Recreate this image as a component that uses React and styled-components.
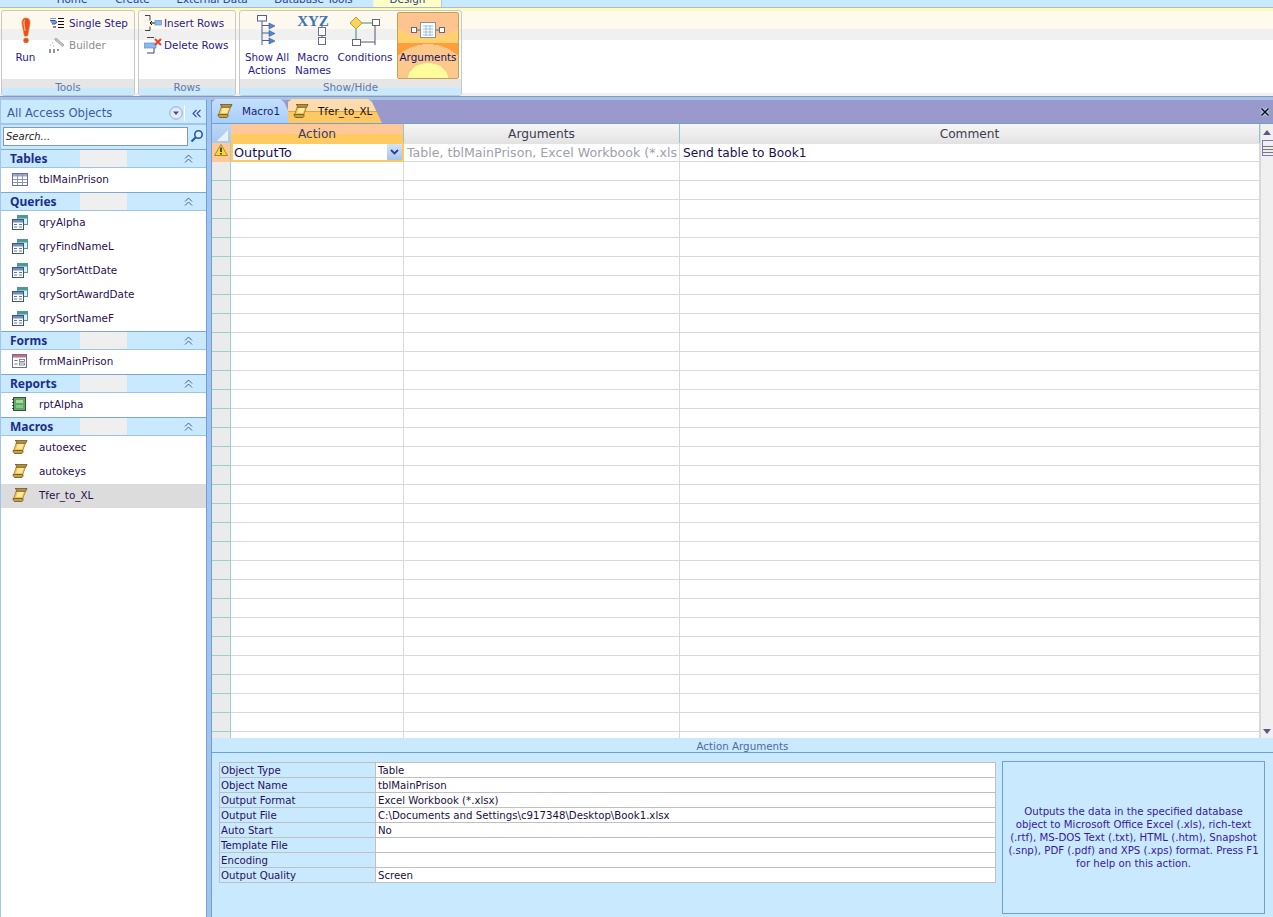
import React from 'react';
import styled, { createGlobalStyle } from 'styled-components';

const GlobalStyle = createGlobalStyle`
  html, body { margin: 0; padding: 0; background: #fff; overflow: hidden; }
  body { font-family: "DejaVu Sans", "Noto Sans", sans-serif; font-size: 10.4px; color: #1c0f5e; }
  * { box-sizing: border-box; }
`;

const BLUE = '#c9e9ff';
const BAR = '#a3c5ed';
const LINE = '#6ea0d8';

/* ---------- drawn icons ---------- */

const RunIcon = () => (
  <svg width="14" height="28" viewBox="0 0 14 28">
    <path d="M7 1C3.500 1 2.600 4 3.200 7.500L5.400 19h3.200l2.200-11.500C11.400 4 10.500 1 7 1z" fill="#ee4a20" stroke="#d8881c" strokeWidth=".7" />
    <path d="M6 3.200C5 3.600 4.800 6 5.200 8l1 6" stroke="#fbb48e" strokeWidth="1.200" fill="none" />
    <circle cx="7" cy="23.400" r="2.500" fill="#e8501c" stroke="#d8881c" strokeWidth=".6" />
  </svg>
);

const StepIcon = () => (
  <svg width="16" height="13" viewBox="0 0 16 13">
    <path d="M1 3.500h5l2 1.800L6 7H3" fill="#7a9bd8" stroke="#37579c" strokeWidth="1" />
    <path d="M1 1.500h6" stroke="#7a9bd8" />
    <path d="M9 1.500h6M9 4.500h6M9 7.500h6M9 10.500h6" stroke="#111" strokeWidth="1" />
    <path d="M4 10h3" stroke="#111" />
  </svg>
);

const BuilderIcon = () => (
  <svg width="16" height="16" viewBox="0 0 16 16">
    <path d="M7 1l8 7-1.500 1.500-8-7z" fill="#c8c8c8" stroke="#8a8a8a" strokeWidth=".7" />
    <path d="M3 6h1M1 8h1M4 9h1" stroke="#9aa4b8" strokeWidth="1.200" />
    <path d="M0 13h2M4 13h2M8 13h2M0 15h2M4 15h2" stroke="#6b7590" strokeWidth="1.300" />
  </svg>
);

const InsertRowsIcon = () => (
  <svg width="18" height="16" viewBox="0 0 18 16">
    <path d="M1 .5h5v5M1 15.500h5v-4" fill="none" stroke="#444" strokeWidth="1" />
    <path d="M6 8H11M8 6l-2 2 2 2" fill="none" stroke="#111" strokeWidth="1" />
    <rect x="11" y="5.500" width="6.500" height="4.500" fill="#8db8ec" stroke="#5f8cc8" strokeWidth=".7" />
  </svg>
);

const DeleteRowsIcon = () => (
  <svg width="18" height="17" viewBox="0 0 18 17">
    <path d="M0 6h12v5H0z" fill="#8db8ec" stroke="#5f8cc8" strokeWidth=".7" />
    <path d="M3 .5h7M10 11v5H3" fill="none" stroke="#445" strokeWidth="1" />
    <path d="M11 2l6 6M17 2l-6 6" stroke="#e8402a" strokeWidth="2" />
  </svg>
);

const ShowAllIcon = () => (
  <svg width="20" height="31" viewBox="0 0 20 31">
    <rect x=".5" y=".5" width="9" height="5.500" fill="#fff" stroke="#555f90" />
    <path d="M5 6v24" stroke="#555f90" />
    <path d="M5 10.500h8M5 18h8M5 25.500h8" stroke="#555f90" />
    <path d="M12 8l6 3-6 3zM12 15.500l6 3-6 3zM12 23l6 3-6 3z" fill="#4f86d8" stroke="#37579c" strokeWidth=".6" />
  </svg>
);

const MacroNamesIcon = () => (
  <svg width="32" height="31" viewBox="0 0 32 31">
    <path d="M25 10v3M25 20v3" stroke="#555f90" />
    <rect x="21.500" y="12.500" width="7" height="8" fill="#fff" stroke="#666e90" />
    <rect x="21.500" y="22.500" width="7" height="7" fill="#fff" stroke="#666e90" />
    <text x="16" y="10.500" textAnchor="middle" fontFamily='"Liberation Serif", serif' fontWeight="700" fontSize="15" fill="#3b72b8">XYZ</text>
  </svg>
);

const ConditionsIcon = () => (
  <svg width="30" height="30" viewBox="0 0 30 30">
    <path d="M12 7h11" stroke="#3c8a7a" />
    <path d="M6 13v11" stroke="#3c8a7a" />
    <path d="M25 10v19M11 26h14" stroke="#557" fill="none" />
    <path d="M6 1l6 6-6 6-6-6z" fill="#f8d45a" stroke="#c89a28" />
    <rect x="22.500" y="3.500" width="7" height="6" fill="#fff" stroke="#667" />
    <rect x="2.500" y="23.500" width="8" height="6" fill="#fff" stroke="#667" />
  </svg>
);

const ArgumentsIcon = () => (
  <svg width="34" height="16" viewBox="0 0 34 16">
    <path d="M6 8h4M24 8h4" stroke="#667" />
    <rect x=".5" y="5.500" width="5" height="5" fill="#fff" stroke="#667" />
    <rect x="28.500" y="5.500" width="5" height="5" fill="#fff" stroke="#667" />
    <rect x="9.500" y=".5" width="15" height="15" fill="#fff" stroke="#8a90a8" />
    <path d="M12 4h10M12 7h10M12 10h10M12 13h10M15 3v11M19 3v11" stroke="#9cc0dc" />
  </svg>
);

const ScrollIcon = ({ size = 16 }) => (
  <svg width={size} height={size} viewBox="0 0 16 16">
    <path d="M4.500 3h9.500l-3.500 9H1.500z" fill="#f2c24e" stroke="#8a6e2c" strokeWidth=".7" />
    <path d="M6 4.500h6l-2 5.500H4z" fill="#ffe9a0" />
    <path d="M3 1.500h12c-.2 1.300-.9 2.300-1.800 2.800H4.400c.8-.8.300-2.200-1.400-2.800z" fill="#b8923c" stroke="#6e5620" strokeWidth=".8" />
    <path d="M1 11.500h9.800c.6.500.3 2.300-.8 3H3c-1.200 0-2-1.500-2-3z" fill="#c9a040" stroke="#6e5620" strokeWidth=".8" />
  </svg>
);

const TableIcon = () => (
  <svg width="16" height="13" viewBox="0 0 16 13">
    <rect x=".5" y=".5" width="15" height="12" fill="#fff" stroke="#687298" />
    <rect x="1" y="1" width="14" height="2.500" fill="#9aa6c8" />
    <path d="M1 6.500h14M1 9.500h14M5.500 1v11M10.500 1v11" stroke="#8a94b8" />
  </svg>
);

const QueryIcon = () => (
  <svg width="16" height="15" viewBox="0 0 16 15">
    <rect x="5.500" y=".5" width="10" height="9" fill="#d8f2ee" stroke="#4a9a9a" />
    <rect x="6" y="1" width="9" height="2.500" fill="#4a9a9a" />
    <rect x=".5" y="4.500" width="11" height="10" fill="#fff" stroke="#47507c" />
    <rect x="1" y="5" width="10" height="2.500" fill="#6f8fc0" />
    <path d="M2 9.500h3M7 9.500h3M2 12h3M7 12h3" stroke="#5a78a8" />
  </svg>
);

const FormIcon = () => (
  <svg width="15" height="14" viewBox="0 0 15 14">
    <rect x=".5" y=".5" width="14" height="13" fill="#fff" stroke="#6a7090" />
    <rect x="1" y="1" width="13" height="2.500" fill="#c86a8a" />
    <path d="M2.500 6.500h3M2.500 10h3" stroke="#6a7090" />
    <rect x="7.500" y="5.500" width="5" height="2" fill="#fff" stroke="#6a7090" strokeWidth=".8" />
    <rect x="7.500" y="9" width="5" height="2" fill="#fff" stroke="#6a7090" strokeWidth=".8" />
  </svg>
);

const ReportIcon = () => (
  <svg width="14" height="14" viewBox="0 0 14 14">
    <rect x="1.500" y=".5" width="12" height="13" fill="#5fa868" stroke="#2d5a33" />
    <rect x="4" y="3" width="7" height="3" fill="#a8d8a0" />
    <rect x="4" y="8" width="7" height="3" fill="#8ac48a" />
    <path d="M1 2v1M1 5v1M1 8v1M1 11v1" stroke="#222" strokeWidth="1.500" />
  </svg>
);

const ICONS = { table: TableIcon, query: QueryIcon, form: FormIcon, report: ReportIcon, macro: ScrollIcon };

const DoubleUp = () => (
  <svg width="9" height="9" viewBox="0 0 9 9">
    <path d="M1 4.500l3.500-3.500L8 4.500M1 8.500L4.500 5 8 8.500" fill="none" stroke="#4a5aa8" strokeWidth="1" />
  </svg>
);

const DoubleLeft = () => (
  <svg width="9" height="9" viewBox="0 0 9 9">
    <path d="M4.500 1L1 4.500 4.500 8M8.500 1L5 4.500 8.500 8" fill="none" stroke="#3a4aa0" strokeWidth="1.100" />
  </svg>
);

const MenuCircle = () => (
  <svg width="14" height="14" viewBox="0 0 14 14">
    <circle cx="7" cy="7" r="6.200" fill="#e4eaf8" stroke="#9aa8cc" />
    <path d="M4 5.500h6L7 9z" fill="#445080" />
  </svg>
);

const Magnifier = () => (
  <svg width="14" height="14" viewBox="0 0 14 14">
    <circle cx="8.500" cy="5.500" r="3.700" fill="#d8eefc" stroke="#2a5a9c" strokeWidth="1.600" />
    <path d="M5.500 8.500L1.500 12.500" stroke="#2a5a9c" strokeWidth="2.200" />
  </svg>
);

const WarnIcon = () => (
  <svg width="14" height="12" viewBox="0 0 14 12">
    <path d="M7 .5l6.500 11H.5z" fill="#f8d838" stroke="#8a7a20" strokeWidth=".8" />
    <path d="M7 3.500v4.500M7 9v1.500" stroke="#111" strokeWidth="1.400" />
  </svg>
);

const Chevron = () => (
  <svg width="9" height="6" viewBox="0 0 9 6">
    <path d="M1 1l3.500 3.500L8 1" fill="none" stroke="#27408c" strokeWidth="1.800" />
  </svg>
);

const CloseIcon = () => (
  <svg width="10" height="10" viewBox="0 0 10 10">
    <path d="M1.500 1.500l7 7M8.500 1.500l-7 7" stroke="#b8dcf8" strokeWidth="3.400" />
    <path d="M1.500 1.500l7 7M8.500 1.500l-7 7" stroke="#111" strokeWidth="1.600" />
  </svg>
);

/* ---------- page ---------- */

const Page = styled.div`
  width: 1273px;
  height: 917px;
  display: flex;
  flex-direction: column;
  overflow: hidden;
`;

const TabStrip = styled.div`
  height: 8px;
  flex: none;
  display: flex;
  padding-left: 44px;
  background: ${BLUE};
  border-bottom: 1px solid #b0b8c4;
  overflow: hidden;
`;

const RibbonTab = styled.div`
  width: ${(p) => p.$w}px;
  height: 16px;
  margin-top: -9px;
  margin-left: ${(p) => p.$ml || 0}px;
  text-align: center;
  line-height: 16px;
  font-size: 10.4px;
  color: #27408c;
  flex: none;
  background: ${(p) => (p.$active ? '#ffffc8' : 'transparent')};
  border-left: ${(p) => (p.$active ? '1px solid #e8f4ff' : 'none')};
  border-right: ${(p) => (p.$active ? '1px solid #a8c8e8' : 'none')};
`;

const Ribbon = styled.div`
  height: 88px;
  flex: none;
  display: flex;
  gap: 3px;
  padding: 2px 0 0 1px;
  background: linear-gradient(to bottom, #fffbb8 0 3px, #fff9ee 3px 21px, #f0f0f0 21px 32px, #fff 32px 85px, #f0f0f0 85px);
`;

const Group = styled.section`
  width: ${(p) => p.$w}px;
  height: 86px;
  display: flex;
  flex-direction: column;
  border: 1px solid #c8c8c8;
  border-radius: 3px;
  overflow: hidden;
  background: linear-gradient(to bottom, #fdf9ef 0 18px, #f0f0f0 18px 29px, #fff 29px);
`;

const GroupBody = styled.div`
  flex: 1;
  display: flex;
  padding: ${(p) => p.$pad || '0'};
`;

const GroupLabel = styled.div`
  height: 16px;
  flex: none;
  text-align: center;
  font-size: 10.4px;
  line-height: 17px;
  color: #5f78a8;
  background: linear-gradient(to bottom, #e6e6e6 0 9px, ${BLUE} 9px);
`;

const BigButton = styled.div`
  width: ${(p) => p.$w}px;
  height: 67px;
  flex: none;
  margin-left: ${(p) => p.$ml || 0}px;
  display: flex;
  flex-direction: column;
  align-items: center;
  text-align: center;
  line-height: 13px;
  font-size: 10.4px;
  white-space: nowrap;
  color: ${(p) => (p.$on ? '#10106a' : '#2a1a8a')};
  ${(p) => p.$on && `
    border: 1px solid #c8a24a;
    border-radius: 2px;
    background:
      radial-gradient(ellipse 20px 15px at 50% 100%, #fffb9c 0 99%, transparent 100%),
      radial-gradient(ellipse 40px 34px at 50% 100%, #fdc88c 0 99%, transparent 100%),
      radial-gradient(ellipse 40px 24px at 50% 0, #fdc490 0 99%, transparent 100%),
      linear-gradient(to bottom, #ffd070 0 30px, #ff9e3a 30px);
  `}
`;

const BigIconSlot = styled.div`
  height: ${(p) => p.$h}px;
  padding-top: ${(p) => p.$top || 0}px;
  display: flex;
  justify-content: center;
  align-items: flex-start;
  flex: none;
`;

const RunLabel = styled.div`
  margin-top: 5px;
`;

const SmallStack = styled.div`
  display: flex;
  flex-direction: column;
  padding-top: 4px;
  gap: 6px;
`;

const SmallButton = styled.div`
  height: 16px;
  display: flex;
  align-items: center;
  gap: ${(p) => p.$gap ?? 4}px;
  font-size: 10.4px;
  color: ${(p) => (p.$disabled ? '#8c8c8c' : '#2a1a8a')};
  white-space: nowrap;
`;

const Workspace = styled.div`
  flex: 1;
  min-height: 0;
  display: flex;
  border-top: 1px solid #8c98b8;
  padding-top: 3px;
  background: ${BAR};
`;

/* ---------- navigation pane ---------- */

const Nav = styled.nav`
  width: 207px;
  flex: none;
  display: flex;
  flex-direction: column;
  background: #fff;
  border-left: 1px solid ${BAR};
  border-right: 1px solid ${LINE};
`;

const NavHeader = styled.div`
  height: 25px;
  flex: none;
  display: flex;
  align-items: center;
  padding: 3px 0 0 6px;
  background: ${BLUE};
  font-size: 11.6px;
  color: #3c5c9c;
  border-bottom: 2px solid ${BAR};
`;

const NavTitle = styled.div`
  flex: 1;
`;

const NavMenu = styled.div`
  width: 17px;
  height: 16px;
  display: flex;
  align-items: center;
  justify-content: center;
  border-right: 1px solid #fff;
  margin-right: 2px;
`;

const NavCollapse = styled.div`
  width: 19px;
  display: flex;
  justify-content: center;
`;

const SearchRow = styled.div`
  height: 24px;
  flex: none;
  display: flex;
  align-items: flex-start;
  padding: 2px 0 0 2px;
  background: ${BLUE};
`;

const SearchBox = styled.div`
  width: 185px;
  height: 19px;
  border: 1px solid #7a99c8;
  background: #fff;
  font-style: italic;
  font-size: 10px;
  line-height: 17px;
  padding-left: 2px;
  color: #222;
`;

const SearchGo = styled.div`
  width: 17px;
  height: 18px;
  display: flex;
  align-items: center;
  justify-content: center;
`;

const GroupHead = styled.div`
  height: 19px;
  flex: none;
  display: flex;
  align-items: center;
  padding: 0 13px 0 9px;
  font-family: "Noto Sans", sans-serif;
  font-size: 12px;
  font-weight: 700;
  color: #1b2f8c;
  border-top: 1px solid #7fa8d0;
  border-bottom: 1px solid #9cc4e8;
  background: linear-gradient(to right, ${BLUE} 79px, #efefef 79px 126px, ${BLUE} 126px);
`;

const GroupName = styled.div`
  flex: 1;
`;

const NavItem = styled.div`
  height: 24px;
  flex: none;
  display: flex;
  align-items: center;
  padding-bottom: 2px;
  background: ${(p) => (p.$selected ? '#dcdcdc' : 'transparent')};
  font-size: 10.4px;
  color: #2a0f4c;
`;

const NavIconSlot = styled.div`
  width: 38px;
  padding-left: 11px;
  flex: none;
  display: flex;
`;

/* ---------- macro grid ---------- */

const Main = styled.main`
  flex: 1;
  min-width: 0;
  margin-left: 4px;
  border-left: 1px solid ${LINE};
  display: flex;
  flex-direction: column;
  background: #fff;
`;

const DocTabs = styled.div`
  height: 24px;
  flex: none;
  display: flex;
  align-items: flex-end;
  background: #9999cc;
  border-bottom: 1px solid ${LINE};
  position: relative;
`;

const DocTab = styled.div`
  width: ${(p) => p.$w}px;
  height: 24px;
  flex: none;
  display: flex;
  align-items: center;
  gap: ${(p) => p.$gap}px;
  padding-left: 5px;
  font-size: 10.4px;
  margin-left: ${(p) => p.$ml || 0}px;
  color: ${(p) => (p.$active ? '#111' : '#1c1c6e')};
  clip-path: polygon(0 3px, 4px 0, calc(100% - 14px) 0, calc(100% - 10px) 3px, 100% 100%, 0 100%);
  background: ${(p) => (p.$active
    ? 'linear-gradient(to bottom, #ffdcae 0 12px, #e8a040 12px 13px, #ffc861 13px)'
    : 'linear-gradient(to bottom, #c4e0fc, #a6cffa)')};
`;

const DocClose = styled.div`
  position: absolute;
  right: 3px;
  top: 7px;
  width: 10px;
  height: 10px;
  display: flex;
`;

const GridWrap = styled.div`
  flex: 1;
  min-height: 0;
  display: flex;
`;

const GridBody = styled.div`
  flex: 1;
  min-width: 0;
  overflow: hidden;
`;

const GridRow = styled.div`
  display: grid;
  grid-template-columns: 19px 173px 276px 1fr;
  height: 19px;
`;

const Corner = styled.div`
  background: linear-gradient(to bottom, #bcd6f6, #a9c8f0);
  display: flex;
  align-items: flex-end;
  justify-content: flex-end;
  padding: 0 3px 3px 0;
`;

const CornerMark = styled.div`
  width: 0;
  height: 0;
  border-style: solid;
  border-width: 0 0 11px 11px;
  border-color: transparent transparent #e8f2fc transparent;
`;

const ColHead = styled.div`
  text-align: center;
  font-size: 12.2px;
  line-height: 20px;
  color: ${(p) => (p.$active ? '#3a4060' : '#3c3c4c')};
  border-right: 1px solid #8fc7d0;
  background: ${(p) => (p.$active
    ? 'linear-gradient(to bottom, #ffc898 0 10px, #ffcb60 10px)'
    : 'linear-gradient(to bottom, #f6f6f6, #e2e2e2)')};
`;

const RowSelector = styled.div`
  background: ${(p) => (p.$active ? '#ffc898' : '#ebebeb')};
  border-bottom: 1px solid ${(p) => (p.$active ? '#ffc898' : '#97d2cf')};
  border-right: 1px solid #97d2cf;
  display: flex;
  justify-content: center;
  padding-top: 1px;
`;

const Cell = styled.div`
  font-size: ${(p) => (p.$muted ? 12.6 : 12.2)}px;
  line-height: 20px;
  padding-left: 3px;
  white-space: nowrap;
  overflow: hidden;
  border-right: 1px solid #d9d9d9;
  border-bottom: 1px solid #d9d9d9;
  color: ${(p) => (p.$muted ? '#a0a0a8' : '#1c0f4e')};
`;

const ActionCell = styled.div`
  display: flex;
  align-items: center;
  justify-content: space-between;
  font-size: 12.8px;
  padding: 1px 0 0 1px;
  border: 2px solid #ffc861;
  border-top: none;
  color: #1c0f4e;
`;

const DropButton = styled.div`
  width: 15px;
  height: 16px;
  display: flex;
  align-items: center;
  justify-content: center;
  background: linear-gradient(to bottom, #d4e4f8, #a8c4ec);
`;

const ScrollTrack = styled.div`
  width: 13px;
  flex: none;
  display: flex;
  flex-direction: column;
  align-items: center;
  padding-top: 6px;
  background: #f0f0f0;
  border-left: 1px solid #d9d9d9;
`;

const ArrowUp = styled.div`
  width: 0;
  height: 0;
  flex: none;
  border-style: solid;
  border-width: 0 4px 5px 4px;
  border-color: transparent transparent #5a5a88 transparent;
`;

const ArrowDown = styled(ArrowUp)`
  border-width: 5px 4px 0 4px;
  border-color: #5a5a88 transparent transparent transparent;
  margin-top: auto;
  margin-bottom: 4px;
`;

const Thumb = styled.div`
  width: 12px;
  height: 16px;
  flex: none;
  margin: 5px 0 0 1px;
  border: 1px solid #7a78b0;
  border-right: none;
  background: repeating-linear-gradient(to bottom, #eee 0 2px, #777 2px 3px);
  background-size: 100% 10px;
  background-repeat: no-repeat;
  background-position: 0 3px;
`;

/* ---------- action arguments ---------- */

const ArgsPanel = styled.div`
  height: 179px;
  flex: none;
  background: ${BLUE};
  display: flex;
  flex-direction: column;
`;

const ArgsTitle = styled.div`
  height: 15px;
  flex: none;
  border-bottom: 1px solid ${LINE};
  text-align: center;
  font-size: 10.3px;
  line-height: 16px;
  color: #4f6aa0;
`;

const ArgsBody = styled.div`
  flex: 1;
  display: flex;
  gap: 6px;
  padding: 8px 8px 3px 7px;
`;

const PropTable = styled.div`
  width: 777px;
  height: 121px;
  margin-top: 1px;
  flex: none;
  display: grid;
  grid-template-columns: 156px 1fr;
  grid-auto-rows: 15px;
  border-top: 1px solid #c0c0c0;
  border-left: 1px solid #c0c0c0;
`;

const PropLabel = styled.div`
  font-size: 10.2px;
  line-height: 15px;
  padding-left: 1px;
  color: #2a0f5c;
  border-right: 1px solid #c0c0c0;
  border-bottom: 1px solid #c0c0c0;
`;

const PropValue = styled.div`
  font-size: 10.2px;
  line-height: 15px;
  padding-left: 2px;
  background: #fff;
  color: #1c0f3e;
  border-right: 1px solid #c0c0c0;
  border-bottom: 1px solid #c0c0c0;
  white-space: nowrap;
`;

const HelpBox = styled.div`
  width: 263px;
  height: 153px;
  flex: none;
  border: 1px solid ${LINE};
  display: flex;
  align-items: center;
  justify-content: center;
  text-align: center;
  padding: 0 5px;
  font-size: 10.2px;
  line-height: 13px;
  color: #3a1a9a;
`;

const RIBBON_TABS = [
  { label: 'Home', w: 56 },
  { label: 'Create', w: 65 },
  { label: 'External Data', w: 94 },
  { label: 'Database Tools', w: 109 },
  { label: 'Design', w: 69, ml: 5, active: true },
];

const NAV_GROUPS = [
  { name: 'Tables', type: 'table', items: ['tblMainPrison'] },
  { name: 'Queries', type: 'query', items: ['qryAlpha', 'qryFindNameL', 'qrySortAttDate', 'qrySortAwardDate', 'qrySortNameF'] },
  { name: 'Forms', type: 'form', items: ['frmMainPrison'] },
  { name: 'Reports', type: 'report', items: ['rptAlpha'] },
  { name: 'Macros', type: 'macro', items: ['autoexec', 'autokeys', 'Tfer_to_XL'] },
];

const PROPS = [
  ['Object Type', 'Table'],
  ['Object Name', 'tblMainPrison'],
  ['Output Format', 'Excel Workbook (*.xlsx)'],
  ['Output File', 'C:\\Documents and Settings\\c917348\\Desktop\\Book1.xlsx'],
  ['Auto Start', 'No'],
  ['Template File', ''],
  ['Encoding', ''],
  ['Output Quality', 'Screen'],
];

const EMPTY_ROWS = Array.from({ length: 31 }, (_, i) => i);

export default function App() {
  return (
    <Page>
      <GlobalStyle />
      <TabStrip>
        {RIBBON_TABS.map((t) => (
          <RibbonTab key={t.label} $w={t.w} $ml={t.ml} $active={t.active}>{t.label}</RibbonTab>
        ))}
      </TabStrip>

      <Ribbon>
        <Group $w={134}>
          <GroupBody>
            <BigButton $w={47}>
              <BigIconSlot $h={35} $top={6}><RunIcon /></BigIconSlot>
              <RunLabel>Run</RunLabel>
            </BigButton>
            <SmallStack>
              <SmallButton><StepIcon />Single Step</SmallButton>
              <SmallButton $disabled><BuilderIcon />Builder</SmallButton>
            </SmallStack>
          </GroupBody>
          <GroupLabel>Tools</GroupLabel>
        </Group>
        <Group $w={98}>
          <GroupBody $pad="0 0 0 5px">
            <SmallStack>
              <SmallButton $gap={2}><InsertRowsIcon />Insert Rows</SmallButton>
              <SmallButton $gap={2}><DeleteRowsIcon />Delete Rows</SmallButton>
            </SmallStack>
          </GroupBody>
          <GroupLabel>Rows</GroupLabel>
        </Group>
        <Group $w={223}>
          <GroupBody $pad="1px 0 0 3px">
            <BigButton $w={48}>
              <BigIconSlot $h={39} $top={3}><ShowAllIcon /></BigIconSlot>
              <div>Show All<br />Actions</div>
            </BigButton>
            <BigButton $w={44}>
              <BigIconSlot $h={39} $top={3}><MacroNamesIcon /></BigIconSlot>
              <div>Macro<br />Names</div>
            </BigButton>
            <BigButton $w={60}>
              <BigIconSlot $h={39} $top={4}><ConditionsIcon /></BigIconSlot>
              <div>Conditions</div>
            </BigButton>
            <BigButton $w={62} $ml={2} $on>
              <BigIconSlot $h={38} $top={9}><ArgumentsIcon /></BigIconSlot>
              <div>Arguments</div>
            </BigButton>
          </GroupBody>
          <GroupLabel>Show/Hide</GroupLabel>
        </Group>
      </Ribbon>

      <Workspace>
        <Nav>
          <NavHeader>
            <NavTitle>All Access Objects</NavTitle>
            <NavMenu><MenuCircle /></NavMenu>
            <NavCollapse><DoubleLeft /></NavCollapse>
          </NavHeader>
          <SearchRow>
            <SearchBox>Search...</SearchBox>
            <SearchGo><Magnifier /></SearchGo>
          </SearchRow>
          {NAV_GROUPS.map((g) => {
            const Icon = ICONS[g.type];
            return (
              <React.Fragment key={g.name}>
                <GroupHead>
                  <GroupName>{g.name}</GroupName>
                  <DoubleUp />
                </GroupHead>
                {g.items.map((item) => (
                  <NavItem key={item} $selected={item === 'Tfer_to_XL'}>
                    <NavIconSlot><Icon /></NavIconSlot>
                    {item}
                  </NavItem>
                ))}
              </React.Fragment>
            );
          })}
        </Nav>

        <Main>
          <DocTabs>
            <DocTab $w={82} $gap={9}><ScrollIcon />Macro1</DocTab>
            <DocTab $w={94} $gap={9} $ml={-6} $active><ScrollIcon />Tfer_to_XL</DocTab>
            <DocClose><CloseIcon /></DocClose>
          </DocTabs>
          <GridWrap>
            <GridBody>
              <GridRow>
                <Corner><CornerMark /></Corner>
                <ColHead $active>Action</ColHead>
                <ColHead>Arguments</ColHead>
                <ColHead>Comment</ColHead>
              </GridRow>
              <GridRow>
                <RowSelector $active><WarnIcon /></RowSelector>
                <ActionCell>OutputTo<DropButton><Chevron /></DropButton></ActionCell>
                <Cell $muted>Table, tblMainPrison, Excel Workbook (*.xls</Cell>
                <Cell>Send table to Book1</Cell>
              </GridRow>
              {EMPTY_ROWS.map((i) => (
                <GridRow key={i}>
                  <RowSelector />
                  <Cell />
                  <Cell />
                  <Cell />
                </GridRow>
              ))}
            </GridBody>
            <ScrollTrack>
              <ArrowUp />
              <Thumb />
              <ArrowDown />
            </ScrollTrack>
          </GridWrap>
          <ArgsPanel>
            <ArgsTitle>Action Arguments</ArgsTitle>
            <ArgsBody>
              <PropTable>
                {PROPS.map(([label, value]) => (
                  <React.Fragment key={label}>
                    <PropLabel>{label}</PropLabel>
                    <PropValue>{value}</PropValue>
                  </React.Fragment>
                ))}
              </PropTable>
              <HelpBox>
                Outputs the data in the specified database object to Microsoft Office Excel (.xls), rich-text (.rtf), MS-DOS Text (.txt), HTML (.htm), Snapshot (.snp), PDF (.pdf) and XPS (.xps) format. Press F1 for help on this action.
              </HelpBox>
            </ArgsBody>
          </ArgsPanel>
        </Main>
      </Workspace>
    </Page>
  );
}
